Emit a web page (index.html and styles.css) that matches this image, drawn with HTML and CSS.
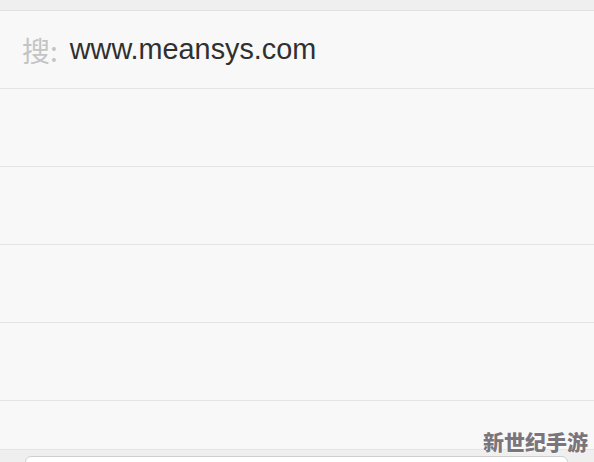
FILE: index.html
```html
<!DOCTYPE html>
<html lang="zh">
<head>
<meta charset="utf-8">
<link rel="stylesheet" href="styles.css">
</head>
<body>
<div class="page">
  <div class="top"></div>
  <div class="row search">
    <span class="label">搜:</span>
    <span class="url">www.meansys.com</span>
  </div>
  <div class="row"></div>
  <div class="row"></div>
  <div class="row"></div>
  <div class="row"></div>
  <div class="row short"></div>
  <div class="toolbar">
    <div class="input"></div>
  </div>
  <div class="watermark">新世纪手游</div>
</div>
</body>
</html>
```
FILE: styles.css
```css
html, body {
  margin: 0;
  padding: 0;
  background: #f8f8f8;
}
.page {
  position: relative;
  width: 594px;
  height: 462px;
  overflow: hidden;
  font-family: "Liberation Sans", "Noto Sans CJK SC", sans-serif;
}
.top {
  height: 10px;
  background: #efefef;
  border-bottom: 1px solid #e0e0e0;
}
.row {
  height: 77px;
  border-bottom: 1px solid #e4e4e4;
  background: #f8f8f8;
  display: flex;
  align-items: center;
  padding-left: 22px;
}
.row.short {
  height: 48px;
}
.label {
  font-family: "Noto Sans CJK SC", sans-serif;
  font-size: 28px;
  color: #c4c4c4;
  margin-right: 12px;
}
.url {
  font-size: 28.8px;
  color: #303030;
}
.toolbar {
  height: 12px;
  background: #efefef;
  padding: 6px 26px 0 25px;
}
.input {
  height: 20px;
  background: #ffffff;
  border: 1px solid #cfcfcf;
  border-radius: 6px;
}
.watermark {
  position: absolute;
  right: 6px;
  bottom: 6px;
  font-family: "Noto Sans CJK SC", sans-serif;
  font-weight: 900;
  font-size: 21px;
  color: #7b767c;
  text-shadow: 0 0 2px #ffffff, 0 0 2px #ffffff;
}
```
